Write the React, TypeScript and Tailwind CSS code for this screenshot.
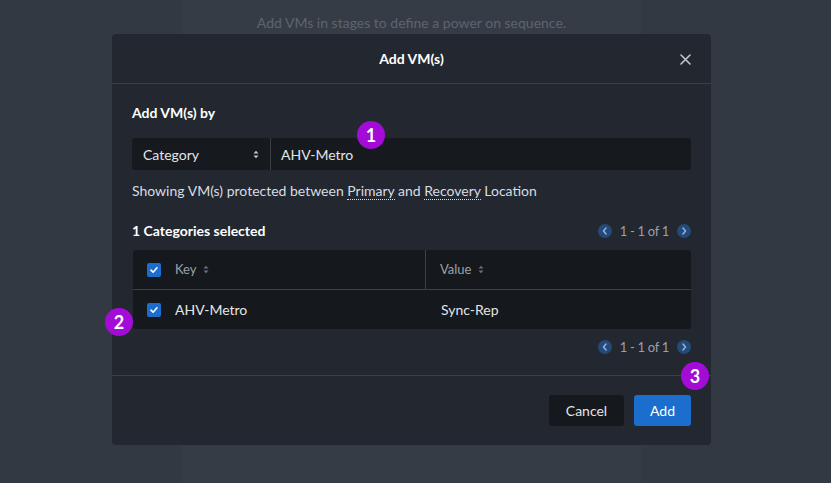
import React from 'react';

// Small purple step marker that sits over the dialog
function StepBadge({ n, className }: { n: number; className: string }) {
  return (
    <div
      className={`absolute w-[28px] h-[28px] rounded-full bg-[#a30bd6] text-white text-[18px] font-bold flex items-center justify-center ${className}`}
    >
      {n}
    </div>
  );
}

function Checkbox() {
  return (
    <div className="w-[14px] h-[14px] rounded-[2px] bg-[#1b6ecd] flex items-center justify-center">
      <svg width="10" height="10" viewBox="0 0 10 10">
        <path d="M2 5.2 L4.1 7.2 L8 2.8" fill="none" stroke="#fff" strokeWidth="1.6" strokeLinecap="round" strokeLinejoin="round" />
      </svg>
    </div>
  );
}

function SortIcon({ color = '#6b717a' }: { color?: string }) {
  return (
    <svg width="6" height="9" viewBox="0 0 6 9">
      <path d="M0.5 3.5 L3 0.8 L5.5 3.5 Z" fill={color} />
      <path d="M0.5 5.5 L3 8.2 L5.5 5.5 Z" fill={color} />
    </svg>
  );
}

function PageCircle({ dir }: { dir: 'left' | 'right' }) {
  return (
    <div className="w-[14px] h-[14px] rounded-full bg-[#244a78] flex items-center justify-center">
      <svg width="6" height="8" viewBox="0 0 6 8">
        <path
          d={dir === 'left' ? 'M4 1 L1.5 4 L4 7' : 'M2 1 L4.5 4 L2 7'}
          fill="none"
          stroke="#8fb3e0"
          strokeWidth="1.5"
          strokeLinecap="round"
          strokeLinejoin="round"
        />
      </svg>
    </div>
  );
}

function Pager() {
  return (
    <div className="flex items-center gap-[8px] text-[13px] text-[#9aa0a8]">
      <PageCircle dir="left" />
      <span className="tracking-[-0.3px]">1 - 1 of 1</span>
      <PageCircle dir="right" />
    </div>
  );
}

export default function App() {
  return (
    <div
      className="relative w-[831px] h-[483px] overflow-hidden bg-[#333943] flex"
      style={{ fontFamily: 'Lato, "Noto Sans", sans-serif' }}
    >
      {/* page behind the dialog */}
      <div className="ml-[182px] w-[459px] h-full bg-[#363c46] flex justify-center pt-[12px]">
        <p className="text-[14px] text-[#5d646f]">Add VMs in stages to define a power on sequence.</p>
      </div>

      {/* dialog */}
      <div className="absolute left-[112px] top-[34px] w-[599px] h-[411px] rounded-[4px] bg-[#222730] flex flex-col">
        <div className="relative h-[50px] flex items-center justify-center border-b border-[#3a404a]">
          <span className="text-[14px] font-bold text-white">Add VM(s)</span>
          <svg className="absolute right-[20px] top-[20px]" width="11" height="11" viewBox="0 0 11 11">
            <path d="M1 1 L10 10 M10 1 L1 10" stroke="#c3c7cd" strokeWidth="1.6" strokeLinecap="round" />
          </svg>
        </div>

        <div className="px-[20px] pt-[20px] pb-[19px] border-b border-[#3a404a] text-[14px] text-[#d9dce1]">
          <p className="leading-[18px] font-bold text-white">Add VM(s) by</p>

          <div className="mt-[16px] h-[32px] rounded-[3px] bg-[#16191d] flex items-center">
            <div className="w-[139px] h-full flex items-center justify-between pl-[11px] pr-[11px] border-r border-[#3a3f47]">
              <span className="text-[#e3e5e8]">Category</span>
              <SortIcon color="#c8ccd1" />
            </div>
            <span className="pl-[10px] text-[#e3e5e8]">AHV-Metro</span>
          </div>

          <p className="mt-[12px] leading-[18px]">
            Showing VM(s) protected between{' '}
            <span className="border-b border-dotted border-[#d9dce1]">Primary</span> and{' '}
            <span className="border-b border-dotted border-[#d9dce1]">Recovery</span> Location
          </p>

          <div className="mt-[22px] flex items-center justify-between leading-[18px]">
            <span className="font-bold text-white">1 Categories selected</span>
            <Pager />
          </div>

          <div className="mt-[10px] ml-[1px] rounded-[3px] bg-[#15181c]">
            <div className="h-[40px] flex items-center border-b border-[#3d424a] text-[13px] text-[#9ba1a9]">
              <div className="w-[293px] h-full flex items-center gap-[14px] pl-[14px] border-r border-[#3d424a]">
                <Checkbox />
                <span className="flex items-center gap-[6px]">
                  Key <SortIcon />
                </span>
              </div>
              <span className="pl-[14px] flex items-center gap-[6px]">
                Value <SortIcon />
              </span>
            </div>
            <div className="h-[39px] flex items-center text-[14px] text-[#e3e5e8]">
              <div className="w-[293px] flex items-center gap-[14px] pl-[14px]">
                <Checkbox />
                <span>AHV-Metro</span>
              </div>
              <span className="pl-[15px]">Sync-Rep</span>
            </div>
          </div>

          <div className="mt-[9px] flex justify-end leading-[18px]">
            <Pager />
          </div>
        </div>

        <div className="flex justify-end gap-[10px] px-[20px] pt-[19px]">
          <button className="w-[75px] h-[31px] rounded-[3px] bg-[#15181c] text-[14px] text-[#e3e5e8]">Cancel</button>
          <button className="w-[57px] h-[31px] rounded-[3px] bg-[#1b6ecd] text-[14px] text-white">Add</button>
        </div>
      </div>

      <StepBadge n={1} className="left-[357px] top-[121px]" />
      <StepBadge n={2} className="left-[105px] top-[308px]" />
      <StepBadge n={3} className="left-[681px] top-[362px]" />
    </div>
  );
}
